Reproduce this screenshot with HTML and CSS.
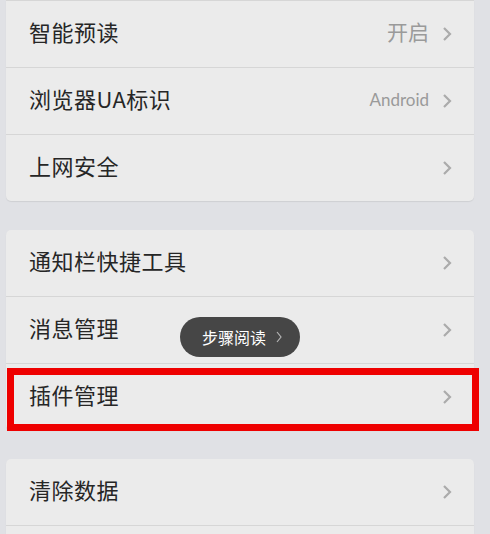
FILE: index.html
```html
<!DOCTYPE html>
<html>
<head>
  <meta charset="utf-8">
  <title>设置</title>
  <link rel="stylesheet" href="styles.css">
</head>
<body>
  <div class="page">

    <div class="group cut">
      <div class="row">
        <span class="label">智能预读</span>
        <span class="value">开启</span>
        <svg class="arrow" viewBox="0 0 10 16"><polyline points="2,2 8,8 2,14"/></svg>
      </div>
      <div class="row">
        <span class="label">浏览器UA标识</span>
        <span class="value latin">Android</span>
        <svg class="arrow" viewBox="0 0 10 16"><polyline points="2,2 8,8 2,14"/></svg>
      </div>
      <div class="row">
        <span class="label">上网安全</span>
        <svg class="arrow" viewBox="0 0 10 16"><polyline points="2,2 8,8 2,14"/></svg>
      </div>
    </div>

    <div class="group">
      <div class="row">
        <span class="label">通知栏快捷工具</span>
        <svg class="arrow" viewBox="0 0 10 16"><polyline points="2,2 8,8 2,14"/></svg>
      </div>
      <div class="row">
        <span class="label">消息管理</span>
        <svg class="arrow" viewBox="0 0 10 16"><polyline points="2,2 8,8 2,14"/></svg>
        <!-- 步骤提示 -->
        <div class="step-tip">
          步骤阅读
          <svg class="tip-arrow" viewBox="0 0 6 12"><polyline points="1,1 5,6 1,11"/></svg>
        </div>
      </div>
      <div class="row">
        <span class="label">插件管理</span>
        <svg class="arrow" viewBox="0 0 10 16"><polyline points="2,2 8,8 2,14"/></svg>
        <div class="highlight"></div>
      </div>
    </div>

    <div class="group">
      <div class="row">
        <span class="label">清除数据</span>
        <svg class="arrow" viewBox="0 0 10 16"><polyline points="2,2 8,8 2,14"/></svg>
      </div>
      <div class="row"></div>
    </div>

  </div>
</body>
</html>
```

FILE: styles.css
```css
body {
  margin: 0;
  padding: 0;
  background-color: #e0e1e5;
  font-family: "Noto Sans CJK SC", "Noto Sans", sans-serif;
}

.page {
  display: flex;
  flex-direction: column;
  gap: 29px;
  padding: 0 16px 0 6px;
  height: 534px;
  overflow: hidden;
}

.group {
  background-color: #ebebeb;
  border-radius: 5px;
  box-shadow: 0 1px 1px rgba(0, 0, 0, 0.08);
}

.group.cut {
  border-radius: 0 0 5px 5px;
  border-top: 1px solid #d6d6d6;
}

.row {
  position: relative;
  display: flex;
  align-items: center;
  height: 66px;
  box-sizing: border-box;
  padding: 0 22px 0 23px;
  border-top: 1px solid #d6d6d6;
}

.row:first-child {
  height: 66px;
  border-top: none;
}

.row + .row {
  height: 67px;
}

.label,
.value {
  position: relative;
  top: -3px;
}

.label {
  flex: 1;
  font-size: 22px;
  color: #262626;
  letter-spacing: 0.5px;
}

.value {
  font-size: 21px;
  color: #9a9a9a;
  margin-right: 13px;
}

.value.latin {
  top: -2px;
  font-family: "Lato", "Noto Sans", sans-serif;
  font-size: 17px;
}

.arrow {
  width: 10px;
  height: 16px;
  fill: none;
  stroke: #ababab;
  stroke-width: 2.2;
}

.step-tip {
  position: absolute;
  left: 174px;
  top: 20px;
  width: 120px;
  height: 40px;
  border-radius: 20px;
  background-color: #464646;
  color: #ffffff;
  font-size: 16px;
  display: flex;
  align-items: center;
  justify-content: center;
  gap: 10px;
  padding-left: 4px;
  box-sizing: border-box;
}

.tip-arrow {
  width: 6px;
  height: 12px;
  fill: none;
  stroke: #b5b5b5;
  stroke-width: 1.2;
}

.highlight {
  position: absolute;
  left: 1px;
  top: 4px;
  right: -5px;
  bottom: -1px;
  border: 7px solid #ee0000;
}
```
